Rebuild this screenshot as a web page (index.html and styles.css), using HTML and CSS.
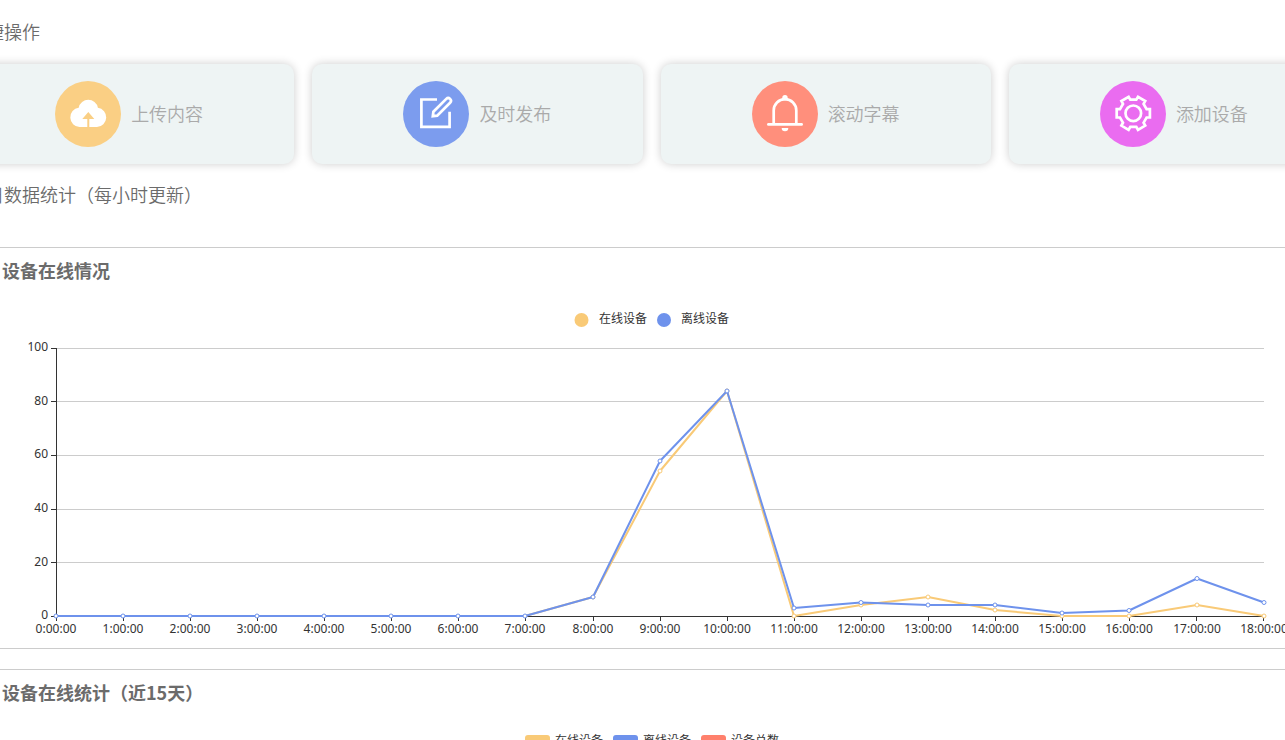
FILE: index.html
```html
<!DOCTYPE html>
<html lang="zh-CN">
<head>
<meta charset="utf-8">
<title>设备数据统计</title>
<link rel="stylesheet" href="styles.css">
</head>
<body>
<main class="page">
  <h2 class="section-title">快捷操作</h2>
  <div class="actions">
    <button class="action" type="button">
      <svg class="action-icon" viewBox="0 0 66 66" aria-hidden="true">
        <circle class="disc-amber" cx="33" cy="33" r="33"/>
        <path fill="#fff" d="M24.5 46a9.7 9.7 0 0 1-.8-19.3a9.8 9.8 0 0 1 19.2 0a9.7 9.7 0 0 1-1 19.3z"/>
        <path class="disc-amber" d="M33.3 31l6 7h-5v8h-2v-8h-5z"/>
      </svg>
      <span class="action-label">上传内容</span>
    </button>
    <button class="action" type="button">
      <svg class="action-icon" viewBox="0 0 66 66" aria-hidden="true">
        <circle class="disc-blue" cx="33" cy="33" r="33"/>
        <g class="glyph">
          <path d="M34 18.5H18.4v27.3h28.2v-15"/>
          <path d="M29.8 35.2l.6-4.5L43.3 17.9a2.6 2.6 0 0 1 3.8 3.8L34.2 34.6z"/>
        </g>
      </svg>
      <span class="action-label">及时发布</span>
    </button>
    <button class="action" type="button">
      <svg class="action-icon" viewBox="0 0 66 66" aria-hidden="true">
        <circle class="disc-red" cx="33" cy="33" r="33"/>
        <g class="glyph">
          <path d="M21.7 43V29.5a11.3 11.3 0 0 1 22.6 0V43"/>
          <path stroke-linecap="round" d="M16.4 43.4h33.2"/>
        </g>
        <circle fill="#fff" cx="33" cy="16.8" r="2.7"/>
        <path fill="#fff" d="M29.7 47h6.6a3.3 3.2 0 0 1-6.6 0z"/>
      </svg>
      <span class="action-label">滚动字幕</span>
    </button>
    <button class="action" type="button">
      <svg class="action-icon" viewBox="0 0 66 66" aria-hidden="true">
        <circle class="disc-pink" cx="33" cy="33" r="33"/>
        <g class="glyph" transform="translate(33.3 32.3)">
          <circle r="7.8"/>
          <path d="M13.3-4.2H16.6V4.2H13.3L10.3 9.4L11.9 12.3L4.7 16.5L3 13.6H-3L-4.7 16.5L-11.9 12.3L-10.3 9.4L-13.3 4.2H-16.6V-4.2H-13.3L-10.3-9.4L-11.9-12.3L-4.7-16.5L-3-13.6H3L4.7-16.5L11.9-12.3L10.3-9.4z"/>
        </g>
      </svg>
      <span class="action-label">添加设备</span>
    </button>
  </div>

  <h2 class="section-title">今日数据统计（每小时更新）</h2>

  <section class="panel panel-first">
    <h3 class="panel-title">设备在线情况</h3>
    <svg class="chart" viewBox="-36 283 1375 365" role="img" aria-label="设备在线情况">
      <circle class="fill-amber" cx="581.5" cy="320" r="7"/>
      <text x="599" y="323">在线设备</text>
      <circle class="fill-blue" cx="664" cy="320" r="7"/>
      <text x="681" y="323">离线设备</text>

      <path class="grid" d="M57 348.5H1264M57 401.5H1264M57 455.5H1264M57 509.5H1264M57 562.5H1264"/>
      <path class="axis" d="M56.5 348V617M51 348.5h5M51 401.5h5M51 455.5h5M51 509.5h5M51 562.5h5M51 616.5H1264"/>
      <path class="axis" d="M56.5 617v4M123.5 617v4M190.5 617v4M257.5 617v4M324.5 617v4M391.5 617v4M458.5 617v4M525.5 617v4M593.5 617v4M660.5 617v4M727.5 617v4M794.5 617v4M861.5 617v4M928.5 617v4M995.5 617v4M1062.5 617v4M1129.5 617v4M1196.5 617v4M1263.5 617v4"/>

      <g text-anchor="end">
        <text x="48" y="351">100</text>
        <text x="48" y="405">80</text>
        <text x="48" y="458">60</text>
        <text x="48" y="512">40</text>
        <text x="48" y="566">20</text>
        <text x="48" y="619">0</text>
      </g>
      <g text-anchor="middle">
        <text x="56" y="633">0:00:00</text>
        <text x="123" y="633">1:00:00</text>
        <text x="190" y="633">2:00:00</text>
        <text x="257" y="633">3:00:00</text>
        <text x="324" y="633">4:00:00</text>
        <text x="391" y="633">5:00:00</text>
        <text x="458" y="633">6:00:00</text>
        <text x="525" y="633">7:00:00</text>
        <text x="593" y="633">8:00:00</text>
        <text x="660" y="633">9:00:00</text>
        <text x="727" y="633">10:00:00</text>
        <text x="794" y="633">11:00:00</text>
        <text x="861" y="633">12:00:00</text>
        <text x="928" y="633">13:00:00</text>
        <text x="995" y="633">14:00:00</text>
        <text x="1062" y="633">15:00:00</text>
        <text x="1129" y="633">16:00:00</text>
        <text x="1197" y="633">17:00:00</text>
        <text x="1264" y="633">18:00:00</text>
      </g>

      <g class="series series-amber">
        <polyline points="56,616 123,616 190,616 257,616 324,616 391,616 458,616 525,616 593,597 660,471 727,391 794,616 861,605 928,597 995,610 1062,616 1129,616 1197,605 1264,616"/>
        <circle cx="593" cy="597" r="2"/><circle cx="660" cy="471" r="2"/><circle cx="727" cy="391" r="2"/><circle cx="794" cy="616" r="2"/><circle cx="861" cy="605" r="2"/><circle cx="928" cy="597" r="2"/><circle cx="995" cy="610" r="2"/><circle cx="1062" cy="616" r="2"/><circle cx="1129" cy="616" r="2"/><circle cx="1197" cy="605" r="2"/><circle cx="1264" cy="616" r="2"/>
      </g>
      <g class="series series-blue">
        <polyline points="56,616 123,616 190,616 257,616 324,616 391,616 458,616 525,616 593,597 660,461 727,391 794,608 861,602.5 928,605 995,605 1062,613 1129,610.5 1197,578.5 1264,602.5"/>
        <circle cx="56" cy="616" r="2"/><circle cx="123" cy="616" r="2"/><circle cx="190" cy="616" r="2"/><circle cx="257" cy="616" r="2"/><circle cx="324" cy="616" r="2"/><circle cx="391" cy="616" r="2"/><circle cx="458" cy="616" r="2"/><circle cx="525" cy="616" r="2"/><circle cx="593" cy="597" r="2"/><circle cx="660" cy="461" r="2"/><circle cx="727" cy="391" r="2"/><circle cx="794" cy="608" r="2"/><circle cx="861" cy="602.5" r="2"/><circle cx="928" cy="605" r="2"/><circle cx="995" cy="605" r="2"/><circle cx="1062" cy="613" r="2"/><circle cx="1129" cy="610.5" r="2"/><circle cx="1197" cy="578.5" r="2"/><circle cx="1264" cy="602.5" r="2"/>
      </g>
    </svg>
  </section>

  <section class="panel">
    <h3 class="panel-title">设备在线统计（近15天）</h3>
    <svg class="chart" viewBox="-36 705 1375 60" role="img" aria-label="设备在线统计（近15天）">
      <rect class="fill-amber" x="525" y="735" width="25" height="14" rx="3"/>
      <text x="555" y="745">在线设备</text>
      <rect class="fill-blue" x="613" y="735" width="25" height="14" rx="3"/>
      <text x="643" y="745">离线设备</text>
      <rect class="fill-red" x="701" y="735" width="25" height="14" rx="3"/>
      <text x="731" y="745">设备总数</text>
    </svg>
  </section>
</main>
</body>
</html>
```
FILE: styles.css
```css
* {
  box-sizing: border-box;
}

body {
  margin: 0;
  height: 100vh;
  overflow: hidden;
  background: #fff;
  font-family: "Noto Sans CJK SC", "Noto Sans", sans-serif;
  color: #6b6b6b;
}

/* The content is wider than the viewport on both sides. */
.page {
  margin: 0 -54px 0 -36px;
  padding-top: 20px;
}

.section-title {
  margin: 0;
  padding: 0 0 2px 4px;
  font-size: 18px;
  font-weight: 350;
  line-height: 22px;
}

.actions {
  display: grid;
  grid-template-columns: repeat(4, 1fr);
  gap: 18px;
  margin: 20px 0 19px;
}

.action {
  display: flex;
  align-items: center;
  justify-content: center;
  gap: 10px;
  padding: 17px 0;
  border: 0;
  border-radius: 10px;
  background: #eef4f4;
  box-shadow: 0 0 10px rgba(0, 0, 0, 0.2);
  color: #aaa;
  font-family: inherit;
  font-size: 18px;
  font-weight: 350;
  line-height: 22px;
  cursor: pointer;
}

.action-icon {
  width: 66px;
  height: 66px;
}

.action-label {
  padding-bottom: 2px;
}

.disc-amber { fill: #facf84; }
.disc-blue { fill: #7c9cee; }
.disc-red { fill: #ff8f7c; }
.disc-pink { fill: #ea6cf0; }

.glyph {
  fill: none;
  stroke: #fff;
  stroke-width: 2.7;
}

.panel {
  margin-bottom: 20px;
  padding-top: 11px;
  border-top: 1px solid #ccc;
  border-bottom: 1px solid #ccc;
}

.panel-first {
  margin-top: 40px;
}

.panel-title {
  margin: 0;
  padding: 0 0 2px 38px;
  font-size: 18px;
  font-weight: 700;
  line-height: 22px;
}

.chart {
  display: block;
  width: 100%;
  height: auto;
  font-family: "Noto Sans", "Noto Sans CJK SC", sans-serif;
  font-size: 12px;
}

.chart text { fill: #333; }
.fill-amber { fill: #f9ca77; }
.fill-blue { fill: #6e92ec; }
.fill-red { fill: #ff806c; }

.grid {
  fill: none;
  stroke: #ccc;
}

.axis {
  fill: none;
  stroke: #333;
}

.series polyline {
  fill: none;
  stroke-width: 2;
  stroke-linejoin: bevel;
}

.series circle {
  fill: #fff;
  stroke-width: 1;
}

.series-amber { stroke: #f9ca77; }
.series-blue { stroke: #6e92ec; }
```
